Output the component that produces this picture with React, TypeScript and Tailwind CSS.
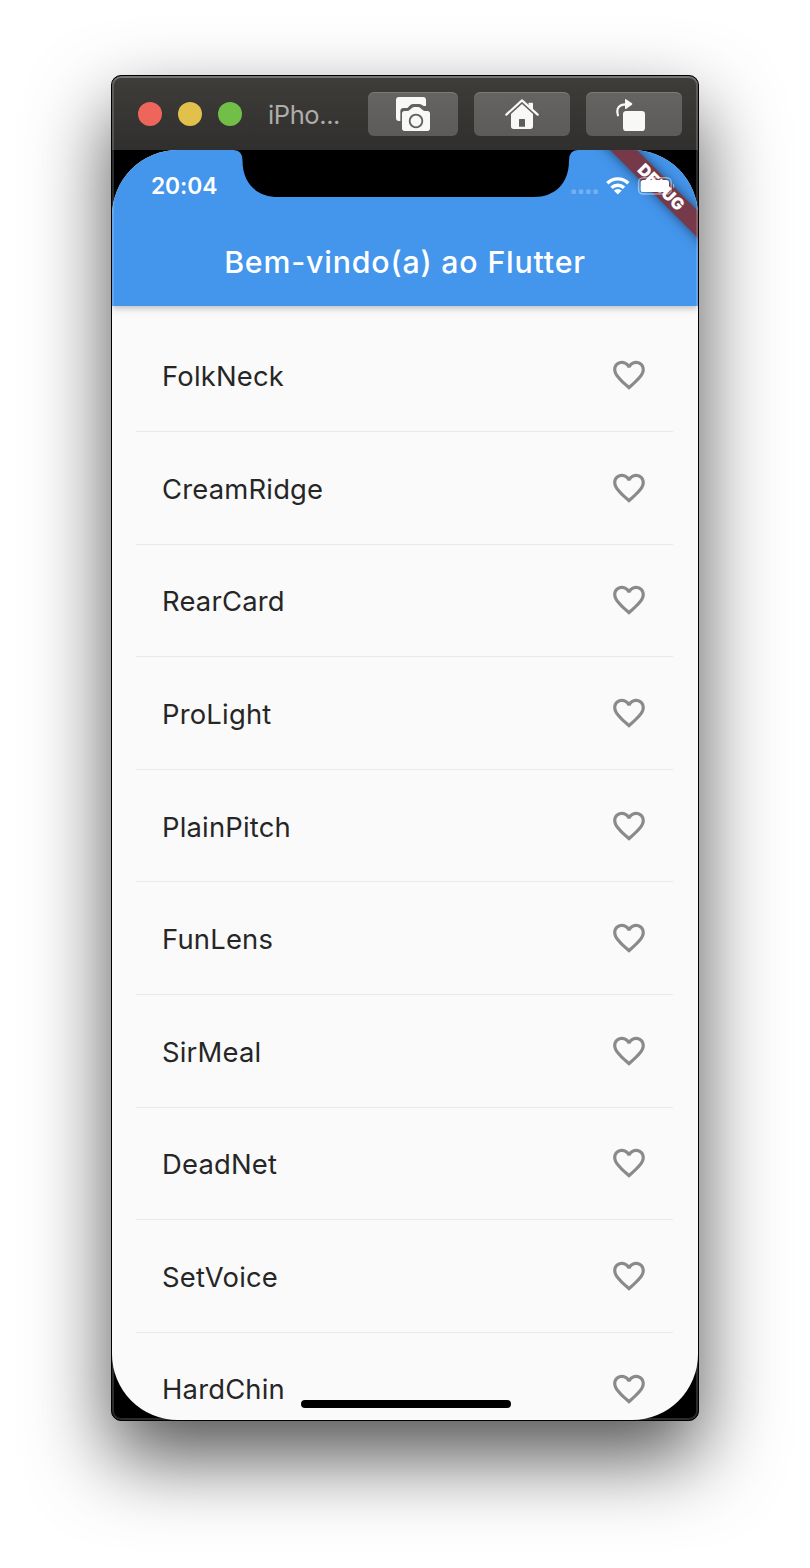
const words = [
  "FolkNeck",
  "CreamRidge",
  "RearCard",
  "ProLight",
  "PlainPitch",
  "FunLens",
  "SirMeal",
  "DeadNet",
  "SetVoice",
  "HardChin",
];

const toolButton =
  "flex h-[44px] shrink-0 overflow-hidden rounded-[6px] bg-gradient-to-b from-[#666463] to-[#5d5b5a] shadow-[inset_0_1px_0_rgba(255,255,255,0.15)]";

function ScreenshotIcon() {
  return (
    <svg width="90" height="44" viewBox="24 36 270 132">
      <path
        fill="#f8f8f7"
        d="M117 51h72q9 0 9 9v18h-7l-6-4q-3-2-7-2h-19q-4 0-7 2l-10 10h-11q-10 0-10 10v29h-4q-9 0-9-9V60q0-9 9-9z"
      />
      <path
        fill="#f8f8f7"
        d="M134 93h8q4 0 7-3l7-6q3-3 7-3h11q4 0 7 3l7 6q3 3 7 3h7q8 0 8 8v44q0 8-8 8h-68q-8 0-8-8v-44q0-8 8-8z"
      />
      <circle cx="168" cy="123" r="19" fill="none" stroke="#62605f" strokeWidth="5.5" />
    </svg>
  );
}

function HomeIcon() {
  return (
    <svg width="96" height="44" viewBox="342 36 288 132">
      <path
        fill="none"
        stroke="#f8f8f7"
        strokeWidth="6.5"
        strokeLinecap="round"
        strokeLinejoin="round"
        d="M439 104l47-43 47 43"
      />
      <path fill="#f8f8f7" d="M506 76V70q0-2 2-2h8q3 0 3 3v18z" />
      <path
        fill="#f8f8f7"
        fillRule="evenodd"
        d="M486 72l33 30v37q0 8-8 8h-50q-8 0-8-8v-37zM479 117q-2 0-2 2v21h18v-21q0-2-2-2z"
      />
    </svg>
  );
}

function RotateIcon() {
  return (
    <svg width="96" height="44" viewBox="678 36 288 132">
      <rect x="789" y="93" width="66" height="60" rx="10" fill="#f8f8f7" />
      <path
        fill="none"
        stroke="#f8f8f7"
        strokeWidth="6.5"
        strokeLinecap="round"
        d="M774 106c-6-20 2-33 24-33"
      />
      <path fill="#f8f8f7" d="M795 59q0-3 3-1l18 12q2 2 0 4l-18 13q-3 1-3-2z" />
    </svg>
  );
}

function Heart() {
  return (
    <svg width="38" height="38" viewBox="0 0 24 24" fill="#8a8a8a">
      <path d="M16.5 3c-1.74 0-3.41.81-4.5 2.09C10.91 3.81 9.24 3 7.5 3 4.42 3 2 5.42 2 8.5c0 3.78 3.4 6.86 8.55 11.54L12 21.35l1.45-1.32C18.6 15.36 22 12.28 22 8.5 22 5.42 19.58 3 16.5 3zm-4.4 15.55l-.1.1-.1-.1C7.14 14.24 4 11.39 4 8.5 4 6.5 5.5 5 7.5 5c1.54 0 3.04.99 3.57 2.36h1.87C13.46 5.99 14.96 5 16.5 5c2 0 3.5 1.5 3.5 3.5 0 2.89-3.14 5.74-7.9 10.05z" />
    </svg>
  );
}

function TitleBar() {
  return (
    <div className="flex h-[74px] items-center bg-gradient-to-b from-[#3e3d3a] to-[#302f2d] pt-[2px] pr-[16px] pl-[26px]">
      <div className="flex shrink-0 gap-4">
        <span className="size-6 rounded-full bg-[#ee665b]" />
        <span className="size-6 rounded-full bg-[#e1c04c]" />
        <span className="size-6 rounded-full bg-[#72bf47]" />
      </div>
      <span className="ml-[26px] w-[100px] shrink-0 pt-[2px] text-[25.5px] leading-none tracking-[-0.4px] whitespace-nowrap text-[#aeadab]">
        iPho...
      </span>
      <div className="flex gap-4">
        <div className={toolButton}>
          <ScreenshotIcon />
        </div>
        <div className={toolButton}>
          <HomeIcon />
        </div>
        <div className={toolButton}>
          <RotateIcon />
        </div>
      </div>
    </div>
  );
}

function StatusIcons() {
  return (
    <svg className="absolute top-[20px] left-[456px]" width="110" height="32" viewBox="568 170 110 32">
      <g fill="#fff" fillOpacity="0.26">
        <rect x="571.5" y="189.5" width="4.5" height="4.5" rx="1" />
        <rect x="578.8" y="189.5" width="4.5" height="4.5" rx="1" />
        <rect x="586.1" y="189.5" width="4.5" height="4.5" rx="1" />
        <rect x="593.4" y="189.5" width="4.5" height="4.5" rx="1" />
      </g>
      <g fill="none" stroke="#fff" strokeWidth="3.4">
        <path d="M607.3 183.2a15 15 0 0 1 21 0" />
        <path d="M611.5 187.8a9 9 0 0 1 12.6 0" />
      </g>
      <path fill="#fff" d="M613.8 190.6q4-3.1 8 0l-4 4z" />
      <rect x="638.6" y="177.8" width="32.6" height="16.2" rx="4.5" fill="none" stroke="#fff" strokeOpacity="0.45" strokeWidth="1.5" />
      <rect x="640.7" y="180" width="28.3" height="12" rx="2.6" fill="#fff" />
      <path d="M673 183.2q2.6 2.7 0 5.4z" fill="#fff" fillOpacity="0.5" />
    </svg>
  );
}

function AppHeader() {
  return (
    <div className="relative z-10 flex h-[156px] flex-col bg-[#4495ec] shadow-[0_2px_7px_rgba(0,0,0,0.26)]">
      <div className="flex h-[72px] items-center pl-[39px] text-[22.8px] font-semibold tracking-[-0.1px] text-white">
        20:04
      </div>
      <h1 className="flex h-[80px] items-center justify-center text-[30.3px] leading-none font-medium tracking-[0.82px] text-white">
        Bem-vindo(a) ao Flutter
      </h1>
    </div>
  );
}

export default function App() {
  return (
    <div className="flex h-[1568px] w-[810px] items-start justify-center overflow-hidden bg-white pt-[75px] font-['Inter',sans-serif]">
      <div className="relative flex h-[1346px] w-[588px] flex-col overflow-hidden rounded-[10px] border border-black bg-black shadow-[0_36px_80px_rgba(0,0,0,0.68)]">
        <TitleBar />
        <div className="relative h-[1270px] overflow-hidden rounded-[66px] bg-[#fafafa]">
          <AppHeader />
          <ul className="flex flex-col pt-[13.4px] pr-[25px] pl-[24px]">
            {words.map((word) => (
              <li
                key={word}
                className="flex h-[112.6px] shrink-0 items-center justify-between border-b border-[#e9e9e9] pr-[25px] pl-[26px] text-[27.4px] tracking-[0.2px] text-[#262626]"
              >
                <span className="pt-[3px]">{word}</span>
                <Heart />
              </li>
            ))}
          </ul>
          <div className="absolute bottom-[12px] left-[188.5px] z-20 h-[8.5px] w-[210px] rounded-full bg-black" />
          <div className="absolute top-[27.5px] left-[448.5px] z-20 flex h-[19px] w-[200px] rotate-45 items-center justify-center bg-[#753949] text-[16.5px] font-black tracking-[0.2px] text-white shadow-[0_0_12px_rgba(0,0,0,0.5)]">
            DEBUG
          </div>
          <svg className="absolute top-0 left-[119px] z-20" width="349" height="48" viewBox="231 150 349 48">
            <path d="M231 149.5h349v.5h-2q-9 0-9 10.500c0 24-15 36.500-35 36.500H278c-20 0-35.500-12.500-35.500-36.500q0-10.500-9-10.500h-2.500z" />
          </svg>
          <div className="absolute inset-0 z-30">
            <StatusIcons />
          </div>
        </div>
        <div className="pointer-events-none absolute inset-0 z-40 rounded-[9px] shadow-[inset_0_0_0_2px_rgba(255,255,255,0.17),inset_0_2px_0_rgba(255,255,255,0.15)]" />
      </div>
    </div>
  );
}
